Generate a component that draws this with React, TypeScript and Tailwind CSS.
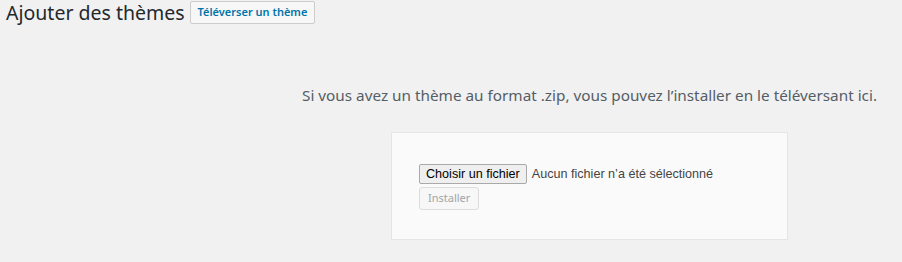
export default function App() {
  return (
    <div
      className="h-[262px] w-[902px] overflow-hidden bg-[#f1f1f1] text-[#23282d]"
      style={{ fontFamily: '"Noto Sans", "Open Sans", sans-serif' }}
    >
      <div className="flex items-start gap-[5px] pl-[6px]">
        <h1 className="text-[19.5px] leading-[26px] font-normal">Ajouter des thèmes</h1>
        <button className="mt-[1px] h-[23px] rounded-[2px] border border-[#cccccc] bg-[#f7f7f7] px-[7px] text-[11px] font-semibold text-[#0073aa]">
          Téléverser un thème
        </button>
      </div>

      <div className="flex w-[1179px] flex-col items-center pt-[59px]">
        <p className="text-[15.3px] leading-[20px] text-[#555d66]">
          Si vous avez un thème au format .zip, vous pouvez l’installer en le téléversant ici.
        </p>
        <div className="mt-[27px] flex h-[108px] w-[397px] flex-col items-start gap-[3px] border border-[#e5e5e5] bg-[#fafafa] pl-[27px] pt-[31px]">
          <div
            className="flex items-center gap-[5px] text-[12.6px]"
            style={{ fontFamily: '"Liberation Sans", sans-serif' }}
          >
            <button className="h-[20px] rounded-[2px] border border-[#a9a9a9] bg-[#efefef] px-[6px] text-[12.6px] text-black">
              Choisir un fichier
            </button>
            <span className="text-[#444444]">Aucun fichier n’a été sélectionné</span>
          </div>
          <button
            disabled
            className="h-[23px] rounded-[3px] border border-[#dddddd] bg-[#f7f7f7] px-[8px] text-[11px] text-[#a0a5aa]"
          >
            Installer
          </button>
        </div>
      </div>
    </div>
  );
}
